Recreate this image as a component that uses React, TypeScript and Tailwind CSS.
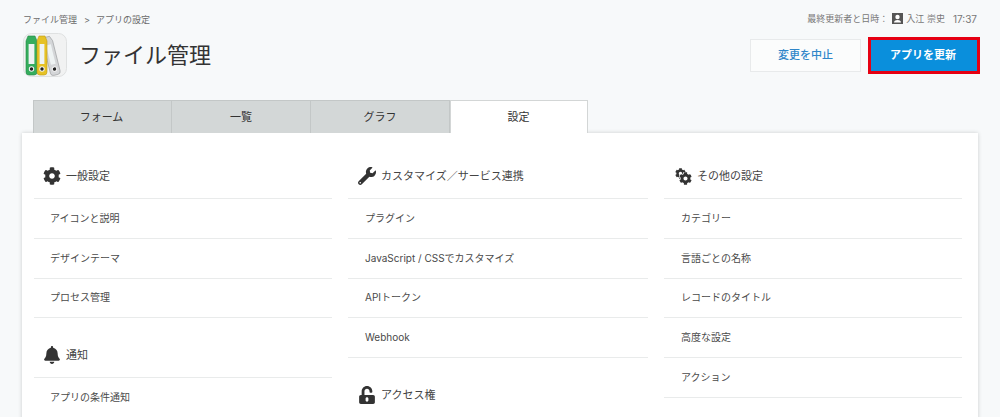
import React from "react";
import { FaCog, FaBell, FaWrench, FaUnlockAlt } from "react-icons/fa";

const font = "font-['Inter','Noto_Sans_CJK_JP',sans-serif]";

function Binder({ x, w, rot, body, dark }: { x: number; w: number; rot: number; body: string; dark: string }) {
  return (
    <g transform={`rotate(${rot} ${x + w / 2} 38)`}>
      <path d={`M${x} 8 L${x + 2} 3 L${x + w - 2} 3 L${x + w} 8 L${x + w} 39 Q${x + w} 42 ${x + w - 3} 42 L${x + 3} 42 Q${x} 42 ${x} 39 Z`} fill={body} stroke={dark} strokeWidth="0.6" />
      <rect x={x + 2.6} y={11} width={w - 5.2} height={20} fill="#eef3f3" />
      <circle cx={x + w / 2} cy={36} r={2.7} fill="#f4f4f4" />
      <circle cx={x + w / 2} cy={36} r={1.7} fill="#222" />
    </g>
  );
}

function AppIcon() {
  return (
    <svg viewBox="0 0 44 44" className="w-[44px] h-[44px] shrink-0">
      <rect x="0.5" y="0.5" width="43" height="43" rx="8" fill="#f1f2f2" stroke="#dfe1e1" />
      <Binder x={27} w={10} rot={-14} body="#d4d6d8" dark="#97999b" />
      <Binder x={3} w={11} rot={0} body="#35ad5d" dark="#218a45" />
      <Binder x={14} w={10} rot={0} body="#e6c225" dark="#c09c12" />
    </svg>
  );
}

function Section({ icon, title, items, first = false, className = "" }: { icon: React.ReactNode; title: string; items: string[]; first?: boolean; className?: string }) {
  return (
    <section className={className}>
      <h2 className={`h-[44px] pb-[1px] flex items-center gap-[5px] text-[11px] leading-none font-normal text-[#444] border-b border-[#e9ebeb] ${first ? "pl-[9px]" : "pl-[10px]"}`}>
        <span className="w-[18px] flex justify-center text-[#333] text-[18px]">{icon}</span>
        {title}
      </h2>
      <ul>
        {items.map((t) => (
          <li key={t} className={`h-[39.75px] flex items-center text-[10px] text-[#4a4a4a] border-b border-[#e9ebeb] ${first ? "pl-[16px]" : "pl-[17px]"}`}>
            {t}
          </li>
        ))}
      </ul>
    </section>
  );
}

function TwoGears() {
  return (
    <span className="relative block w-[18px] h-[17px]">
      <FaCog className="absolute left-[1px] top-0 text-[11px]" />
      <FaCog className="absolute right-0 bottom-0 text-[13px] stroke-white stroke-[50] [paint-order:stroke]" />
    </span>
  );
}

export default function App() {
  const tabs = ["フォーム", "一覧", "グラフ", "設定"];
  return (
    <div className={`${font} w-full h-[417px] overflow-hidden bg-[#f7f9fa] text-[#333]`}>
      <header className="flex justify-between px-[20px]">
        <div className="pl-[3px]">
          <div className="pt-[14px] h-[33px] flex text-[9px] leading-[12px] text-[#6b6b6b]">
            <span>ファイル管理</span>
            <span className="ml-[7px] mr-[6px]">&gt;</span>
            <span>アプリの設定</span>
          </div>
          <div className="flex items-center gap-[12px]">
            <AppIcon />
            <h1 className="text-[22px] leading-none font-normal text-[#333]">ファイル管理</h1>
          </div>
        </div>
        <div className="flex flex-col items-end">
          <div className="pt-[12px] h-[37px] flex items-start pr-[3px] text-[9px] leading-[14px] text-[#777]">
            <span>最終更新者と日時：</span>
            <span className="w-[11px] h-[11px] ml-[4px] mr-[3px] mt-[1px] bg-[#555] flex items-end justify-center overflow-hidden">
              <svg viewBox="0 0 11 11" className="w-[11px] h-[11px]">
                <circle cx="5.5" cy="4" r="2.2" fill="#fff" />
                <path d="M2 9.5 Q2 7 5.5 7 Q9 7 9 9.5 Z" fill="#fff" />
              </svg>
            </span>
            <span>入江 崇史</span>
            <span className="ml-[8px] text-[10px]">17:37</span>
          </div>
          <div className="flex items-center gap-[7px]">
            <button className="w-[111px] h-[33px] bg-[#fbfcfc] border border-[#e8eaeb] text-[#2f86c9] text-[11px] font-medium">変更を中止</button>
            <button className="w-[112px] h-[37px] pr-[2px] bg-[#0a8fdc] border-[3px] border-[#e60012] text-white text-[11px] font-semibold">アプリを更新</button>
          </div>
        </div>
      </header>

      <nav className="flex mt-[23px] ml-[33px]">
        {tabs.map((t, i) => (
          <div
            key={t}
            className={
              i === 3
                ? "w-[138px] h-[33px] pr-[1px] flex items-center justify-center bg-white border border-b-0 border-[#d3d6d6] text-[11px] text-[#333]"
                : "w-[139px] h-[33px] flex items-center justify-center bg-[#d3d7d7] border-r border-t border-[#c3c7c7] first:border-l first:pr-[2px] text-[11px] text-[#333]"
            }
          >
            {t}
          </div>
        ))}
      </nav>

      <main className="mx-[22px] h-[300px] bg-white shadow-[0_0_4px_rgba(0,0,0,0.18)] pl-[12px] pt-[22px] grid grid-cols-[298px_300px_298px] gap-x-[16px] content-start">
        <div>
          <Section first icon={<FaCog />} title="一般設定" items={["アイコンと説明", "デザインテーマ", "プロセス管理"]} />
          <Section first className="mt-[16px]" icon={<FaBell />} title="通知" items={["アプリの条件通知"]} />
        </div>
        <div>
          <Section icon={<FaWrench />} title="カスタマイズ／サービス連携" items={["プラグイン", "JavaScript / CSSでカスタマイズ", "APIトークン", "Webhook"]} />
          <Section className="mt-[16px]" icon={<FaUnlockAlt />} title="アクセス権" items={[]} />
        </div>
        <div>
          <Section icon={<TwoGears />} title="その他の設定" items={["カテゴリー", "言語ごとの名称", "レコードのタイトル", "高度な設定", "アクション"]} />
        </div>
      </main>
    </div>
  );
}
